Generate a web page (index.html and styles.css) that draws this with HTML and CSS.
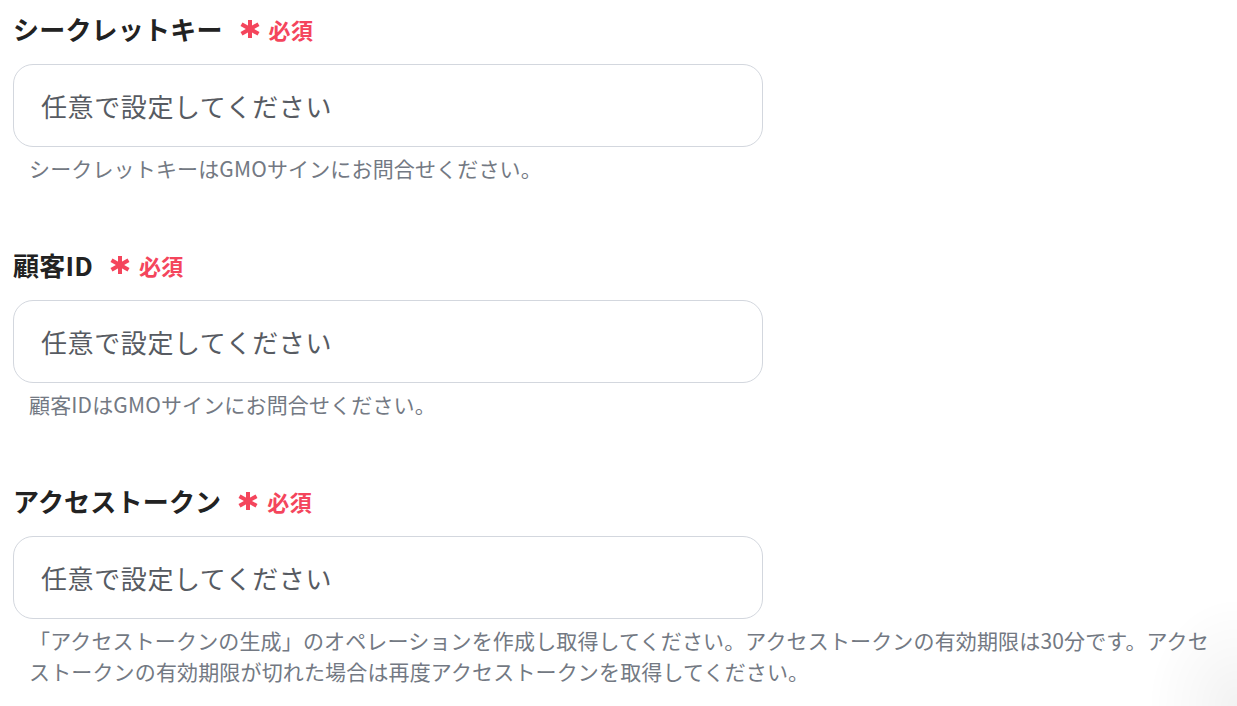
FILE: index.html
```html
<!DOCTYPE html>
<html lang="ja">
<head>
<meta charset="utf-8">
<title>設定</title>
<link rel="stylesheet" href="styles.css">
</head>
<body>
<main class="form">
  <section class="field">
    <div class="label-row">
      <span class="label">シークレットキー</span>
      <span class="required">
        <svg class="asterisk" viewBox="0 0 20 18" aria-hidden="true"><g stroke="currentColor" stroke-width="4" stroke-linecap="butt"><line x1="10" y1="0" x2="10" y2="18"/><line x1="1.5" y1="4.2" x2="18.5" y2="13.8"/><line x1="1.5" y1="13.8" x2="18.5" y2="4.2"/></g></svg>
        <span class="req-text">必須</span>
      </span>
    </div>
    <input class="input" type="text" placeholder="任意で設定してください">
    <p class="help">シークレットキーはGMOサインにお問合せください。</p>
  </section>

  <section class="field">
    <div class="label-row">
      <span class="label">顧客ID</span>
      <span class="required">
        <svg class="asterisk" viewBox="0 0 20 18" aria-hidden="true"><g stroke="currentColor" stroke-width="4" stroke-linecap="butt"><line x1="10" y1="0" x2="10" y2="18"/><line x1="1.5" y1="4.2" x2="18.5" y2="13.8"/><line x1="1.5" y1="13.8" x2="18.5" y2="4.2"/></g></svg>
        <span class="req-text">必須</span>
      </span>
    </div>
    <input class="input" type="text" placeholder="任意で設定してください">
    <p class="help">顧客IDはGMOサインにお問合せください。</p>
  </section>

  <section class="field">
    <div class="label-row">
      <span class="label">アクセストークン</span>
      <span class="required">
        <svg class="asterisk" viewBox="0 0 20 18" aria-hidden="true"><g stroke="currentColor" stroke-width="4" stroke-linecap="butt"><line x1="10" y1="0" x2="10" y2="18"/><line x1="1.5" y1="4.2" x2="18.5" y2="13.8"/><line x1="1.5" y1="13.8" x2="18.5" y2="4.2"/></g></svg>
        <span class="req-text">必須</span>
      </span>
    </div>
    <input class="input" type="text" placeholder="任意で設定してください">
    <p class="help">「アクセストークンの生成」のオペレーションを作成し取得してください。アクセストークンの有効期限は30分です。アクセストークンの有効期限が切れた場合は再度アクセストークンを取得してください。</p>
  </section>
</main>
<div class="corner-shadow" aria-hidden="true"></div>
</body>
</html>
```

FILE: styles.css
```css
html, body {
  margin: 0;
  padding: 0;
  background: #ffffff;
}

body {
  font-family: "Noto Sans CJK JP", "Noto Sans", sans-serif;
  color: #222222;
  overflow: hidden;
}

.form {
  display: flex;
  flex-direction: column;
  gap: 66px;
  padding: 14px 22px 0 13px;
}

.field {
  display: flex;
  flex-direction: column;
}

.label-row {
  display: flex;
  align-items: center;
  height: 30px;
  gap: 17px;
  margin-bottom: 20px;
}

.label {
  font-size: 26px;
  font-weight: 700;
  letter-spacing: 0.2px;
  line-height: 30px;
  color: #222222;
}

.required {
  display: flex;
  align-items: center;
  gap: 9px;
  color: #f4455c;
}

.asterisk {
  width: 20px;
  height: 18px;
  display: block;
}

.req-text {
  font-size: 22px;
  font-weight: 700;
  line-height: 30px;
  letter-spacing: 0.4px;
}

.input {
  box-sizing: border-box;
  width: 750px;
  height: 83px;
  margin: 0;
  padding: 0 27px;
  border: 1px solid #d3d7de;
  border-radius: 20px;
  background: #ffffff;
  font-family: "Noto Sans CJK JP", "Noto Sans", sans-serif;
  font-size: 26px;
  letter-spacing: 0.6px;
  color: #333333;
  outline: none;
}

.input::placeholder {
  color: #575b62;
  opacity: 1;
}

.help {
  margin: 6px 0 0 16px;
  font-size: 21px;
  line-height: 31px;
  letter-spacing: 0.15px;
  color: #737983;
}

.corner-shadow {
  position: fixed;
  right: 0;
  bottom: 0;
  width: 90px;
  height: 110px;
  background: radial-gradient(ellipse at 100% 100%, rgba(0, 0, 0, 0.05) 0%, rgba(0, 0, 0, 0.025) 35%, rgba(0, 0, 0, 0) 70%);
  pointer-events: none;
}
```
